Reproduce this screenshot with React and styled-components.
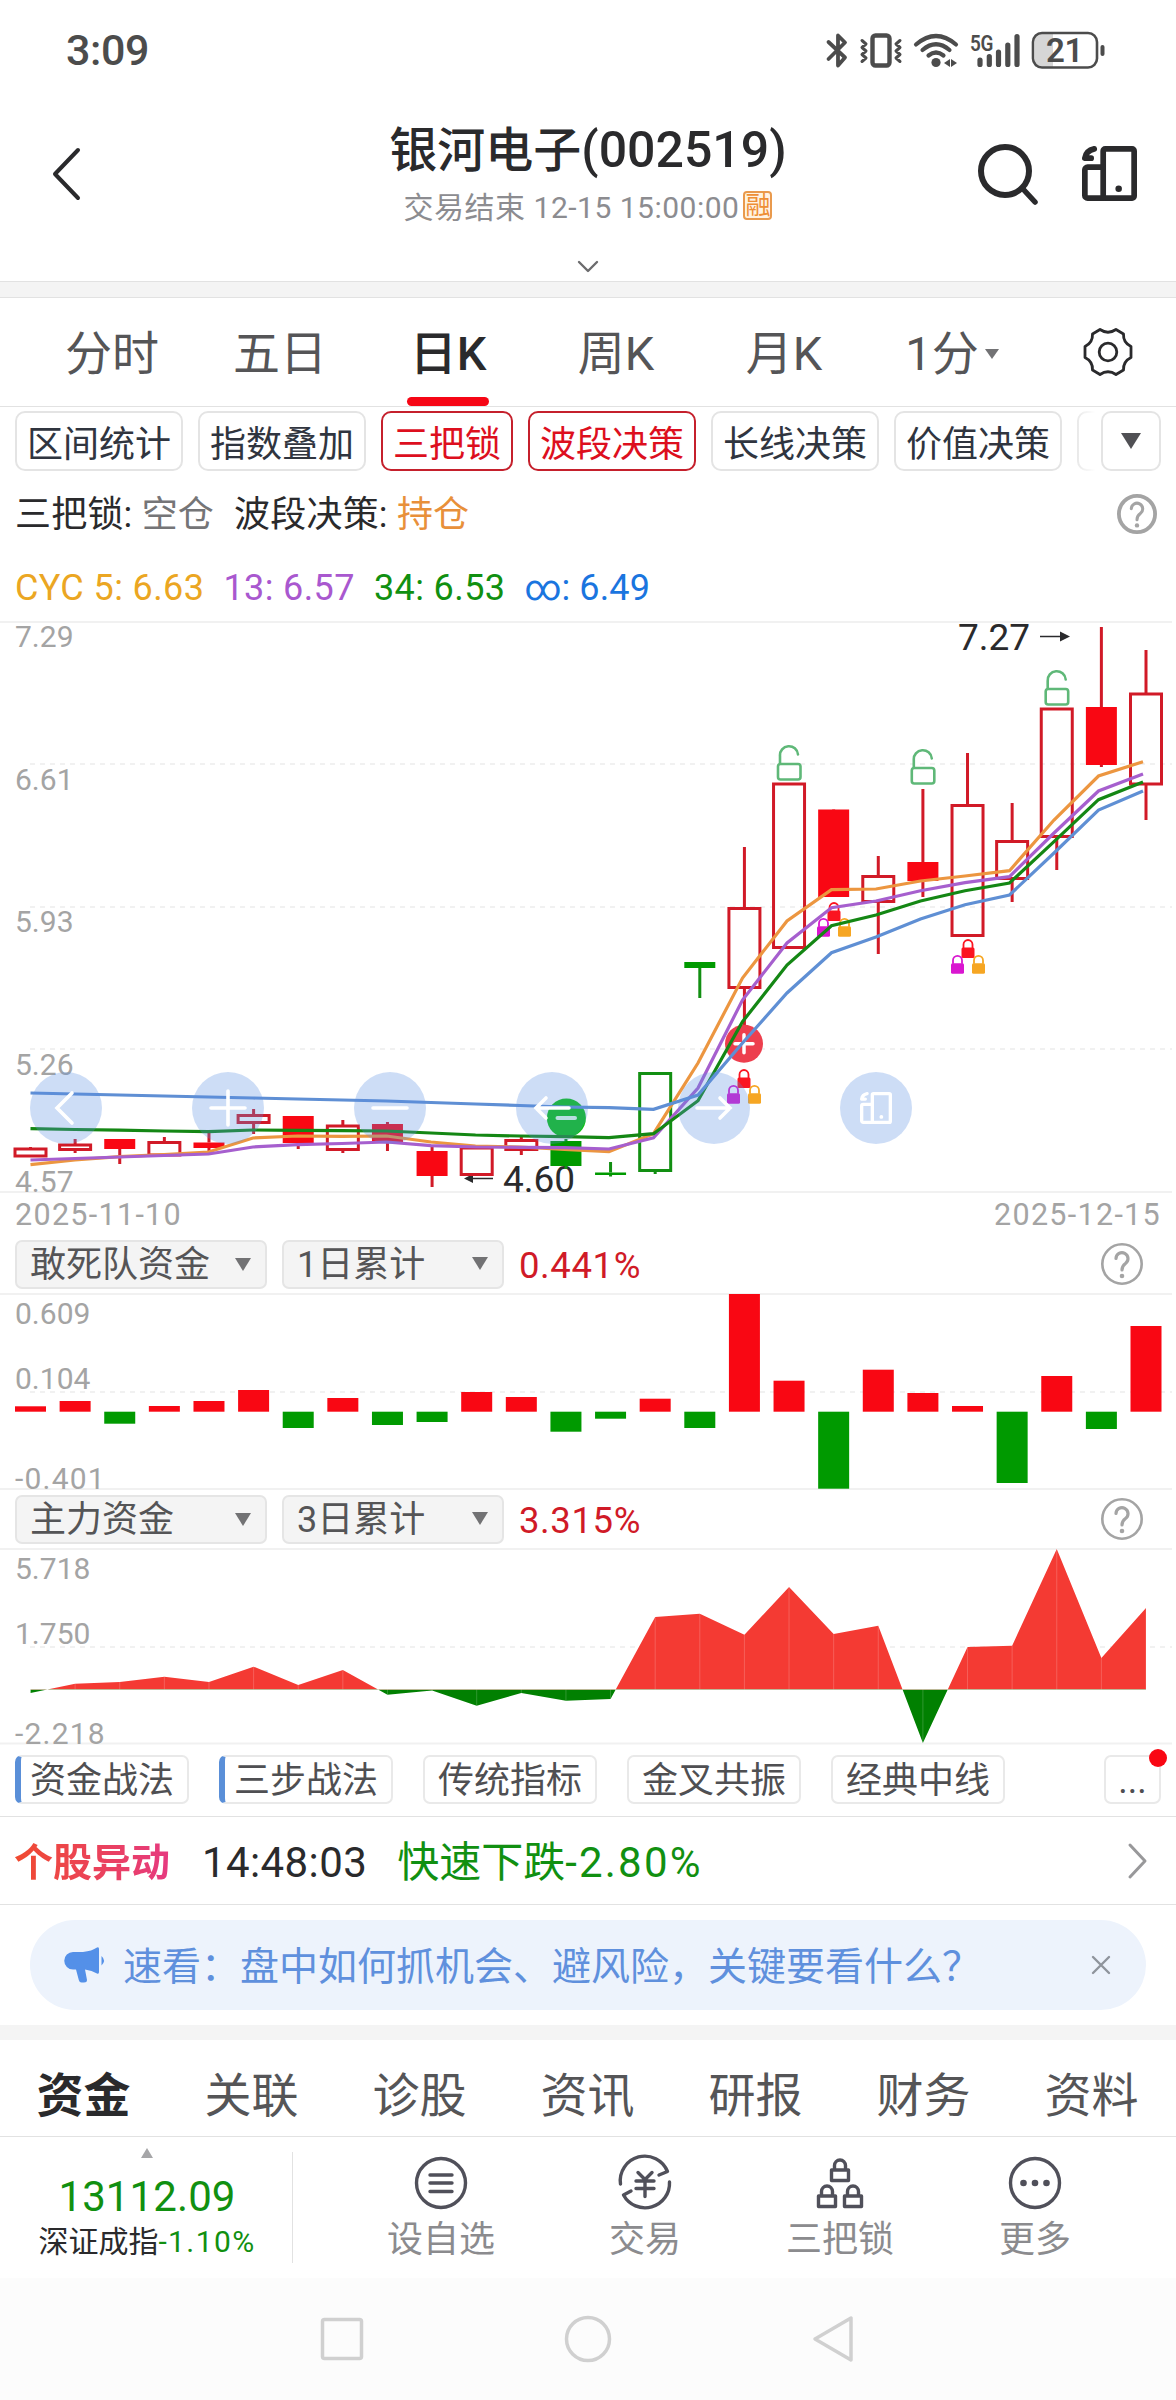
import React from 'react';
import styled, { createGlobalStyle, css } from 'styled-components';

const GlobalStyle = createGlobalStyle`
    * {
        box-sizing: border-box;
    }
    body {
        margin: 0;
        background: #fff;
        font-family: Roboto, "Noto Sans CJK SC", sans-serif;
        color: #2a2a2c;
    }
    svg {
        display: block;
        flex: none;
        overflow: visible;
    }
`;

const PageStyled = styled.div`
    width: 1176px;
    height: 2400px;
    display: flex;
    flex-direction: column;
    overflow: hidden;
    background: #fff;
    white-space: nowrap;
`;

/* ---------- top ---------- */

const StatusBarStyled = styled.div`
    height: 100px;
    padding: 0 66px 0 66px;
    display: flex;
    align-items: center;
    justify-content: space-between;
    font-size: 43px;
    font-weight: 500;
    letter-spacing: -.4px;
    color: #4c4c4c;
`;

const HeaderStyled = styled.header`
    height: 181px;
    display: grid;
    grid-template-columns: 300px 1fr 300px;
`;

const BackStyled = styled.div`
    padding: 47px 0 0 52px;
`;

const TitleBlockStyled = styled.div`
    display: flex;
    flex-direction: column;
    align-items: center;
`;

const TitleStyled = styled.h1`
    margin: 20px 0 0;
    font-size: 48px;
    font-weight: 500;
    line-height: 60px;

    span {
        font-size: 50px;
    }
`;

const SubtitleStyled = styled.div`
    display: flex;
    align-items: center;
    height: 40px;
    margin-top: 4px;
    font-size: 30px;
    letter-spacing: .5px;
    color: #8c8c90;
`;

const MarginBadgeStyled = styled.span`
    width: 29px;
    height: 29px;
    margin-left: 4px;
    border: 2px solid #e99a4d;
    border-radius: 4px;
    background: #fff3e2;
    color: #ee8f35;
    font-size: 25px;
    line-height: 25px;
    letter-spacing: 0;
    text-align: center;
    display: flex;
    align-items: center;
    justify-content: center;
`;

const ExpandStyled = styled.div`
    margin-top: 35px;
`;

const HeaderActionsStyled = styled.div`
    display: flex;
    justify-content: flex-end;
    gap: 43px;
    padding: 43px 39px 0 0;

    svg + svg {
        margin-top: 3px;
    }
`;

const BandStyled = styled.div`
    height: ${({ $height }) => $height}px;
    background: #f4f4f4;
    ${({ $lined }) => $lined && css`
        border-top: 1px solid #e2e2e2;
        border-bottom: 1px solid #e2e2e2;
    `}
`;

/* ---------- period tabs ---------- */

const PeriodTabsStyled = styled.nav`
    height: 109px;
    padding-left: 28px;
    display: flex;
    border-bottom: 1px solid #e2e2e2;
`;

const PeriodTabStyled = styled.div`
    position: relative;
    width: 168px;
    padding-top: 21px;
    display: flex;
    justify-content: center;
    font-size: 47px;
    line-height: 70px;
    color: ${({ $active }) => ($active ? '#2a2a2c' : '#555557')};
    font-weight: ${({ $active }) => ($active ? 500 : 400)};

    ${({ $active }) => $active && css`
        &::after {
            content: "";
            position: absolute;
            left: 43px;
            bottom: 0;
            width: 82px;
            height: 9px;
            border-radius: 5px;
            background: #f60615;
        }
    `}
`;

const CaretStyled = styled.i`
    align-self: ${({ $top }) => ($top ? 'flex-start' : 'center')};
    width: 0;
    height: 0;
    margin: ${({ $margin }) => $margin || 0};
    border-left: ${({ $size }) => $size}px solid transparent;
    border-right: ${({ $size }) => $size}px solid transparent;
    border-top: ${({ $tall }) => $tall}px solid ${({ $color }) => $color || '#727274'};
`;

const SettingsStyled = styled.div`
    flex: 1;
    display: flex;
    justify-content: center;
    padding: 29px 0 0 4px;
`;

/* ---------- indicator chips ---------- */

const ChipRowStyled = styled.div`
    height: 64px;
    padding: 4px 15px 0;
    display: flex;
`;

const ChipScrollStyled = styled.div`
    position: relative;
    width: 1080px;
    display: flex;
    gap: 15px;
    overflow: hidden;

    &::after {
        content: "";
        position: absolute;
        right: 0;
        top: 0;
        width: 22px;
        height: 60px;
        background: linear-gradient(90deg, rgba(255, 255, 255, 0), #fff);
    }
`;

const ChipStyled = styled.div`
    flex: none;
    height: 60px;
    min-width: 60px;
    padding: 3px 10px 0;
    border: 2px solid ${({ $on }) => ($on ? '#c5202c' : '#e4e4e4')};
    border-radius: 10px;
    font-size: 36px;
    line-height: 59px;
    color: ${({ $on }) => ($on ? '#dd0f1e' : '#30353f')};
`;

const MoreChipStyled = styled(ChipStyled)`
    margin-left: 6px;
    padding-top: 0;
    width: 60px;
    display: flex;
    justify-content: center;
`;

/* ---------- signals ---------- */

const SignalRowStyled = styled.div`
    height: 86px;
    padding: 0 19px 0 15px;
    display: flex;
    align-items: center;
    font-size: 36px;
    line-height: 50px;
`;

const SignalStyled = styled.span`
    margin: 1px 20px 0 0;
    letter-spacing: .2px;
    white-space: pre;

    em {
        font-style: normal;
        color: ${({ $color }) => $color};
    }
`;

const PushRightStyled = styled.div`
    margin-left: auto;
`;

const AverageRowStyled = styled.div`
    height: 64px;
    padding: 0 0 0 15px;
    display: flex;
    gap: 19px;
    font-size: 36px;
    line-height: 62px;
    letter-spacing: .4px;
`;

const AverageStyled = styled.span`
    color: ${({ $color }) => $color};

    &:last-child {
        letter-spacing: .1px;
    }
`;

/* ---------- charts ---------- */

const ChartBoxStyled = styled.div`
    position: relative;
`;

const ChartButtonsStyled = styled.div`
    position: absolute;
    left: 30px;
    top: 451px;
    display: flex;
    gap: 90px;
`;

const ChartButtonStyled = styled.div`
    width: 72px;
    height: 72px;
    border-radius: 50%;
    background: rgba(88, 141, 225, .3);
    display: flex;
    align-items: center;
    justify-content: center;
`;

const DateRowStyled = styled.div`
    height: 42px;
    padding: 0 15px 0 15px;
    display: flex;
    justify-content: space-between;
    font-size: 30.5px;
    line-height: 43px;
    letter-spacing: 1.3px;
    color: #a4a4a4;
`;

const IndicatorHeadStyled = styled.div`
    height: 58px;
    padding: 0 33px 0 15px;
    display: flex;
    align-items: center;
`;

const SelectStyled = styled.div`
    width: ${({ $width }) => $width}px;
    height: 49px;
    margin-right: 15px;
    padding: 2px 14px 0 13px;
    border: 2px solid #e5e5e5;
    border-radius: 7px;
    background: #f4f4f4;
    display: flex;
    align-items: center;
    justify-content: space-between;
    font-size: 36px;
    line-height: 48px;
    color: #555557;
`;

const IndicatorValueStyled = styled.span`
    margin-top: 2px;
    font-size: 36.5px;
    letter-spacing: .6px;
    color: #d01a27;
`;

/* ---------- strategies ---------- */

const StrategyRowStyled = styled.div`
    height: 72px;
    padding: 10px 15px 0;
    display: flex;
    gap: 30px;
    border-bottom: 1px solid #e2e2e2;
`;

const StrategyStyled = styled.div`
    position: relative;
    width: 174px;
    height: 49px;
    border: 2px solid #e9e9e9;
    border-left: ${({ $marked }) => ($marked ? '6px solid #5a8fd8' : '2px solid #e9e9e9')};
    border-radius: 7px;
    padding-left: ${({ $marked }) => ($marked ? 9 : 13)}px;
    font-size: 36px;
    line-height: 49px;
    color: #4f4f52;
`;

const StrategyMoreStyled = styled(StrategyStyled)`
    width: 57px;
    margin-left: auto;
    padding: 0;
    text-align: center;
`;

const DotStyled = styled.i`
    position: absolute;
    right: -8px;
    top: -8px;
    width: 18px;
    height: 18px;
    border-radius: 50%;
    background: #f90713;
`;

/* ---------- alert, banner ---------- */

const AlertRowStyled = styled.div`
    height: 88px;
    padding: 0 28px 0 14px;
    display: flex;
    align-items: center;
    border-bottom: 1px solid #e2e2e2;
    font-size: 42px;
    line-height: 60px;
`;

const AlertTagStyled = styled.b`
    width: 156px;
    margin: 4px 32px 0 0;
    font-size: 39px;
    background: linear-gradient(90deg, #f04b30, #e63a80);
    -webkit-background-clip: text;
    background-clip: text;
    color: transparent;
`;

const AlertTimeStyled = styled.span`
    margin-top: 4px;
    letter-spacing: .4px;
`;

const AlertTextStyled = styled.span`
    margin: 4px 0 0 30px;
    color: #119011;

    span {
        letter-spacing: 2.2px;
    }
`;

const BannerStyled = styled.div`
    height: 90px;
    margin: 15px 30px;
    padding: 0 35px 0 33px;
    border-radius: 45px;
    background: #edf3fc;
    display: flex;
    align-items: center;
    font-size: 39px;
    color: #5f90dd;

    span {
        margin: -4px 0 0 16px;
    }
`;

/* ---------- bottom ---------- */

const SectionTabsStyled = styled.nav`
    height: 97px;
    display: grid;
    grid-template-columns: repeat(7, 1fr);
    border-bottom: 1px solid #e2e2e2;
`;

const SectionTabStyled = styled.div`
    padding: 15px 1px 0 0;
    text-align: center;
    font-size: 47px;
    line-height: 82px;
    font-weight: ${({ $active }) => ($active ? 700 : 400)};
    color: ${({ $active }) => ($active ? '#2a2a2c' : '#555557')};
`;

const BottomBarStyled = styled.div`
    height: 141px;
    display: flex;
`;

const IndexStyled = styled.div`
    width: 293px;
    height: 111px;
    margin-top: 15px;
    padding-left: 2px;
    border-right: 1px solid #e2e2e2;
    display: flex;
    flex-direction: column;
    align-items: center;
    font-size: 30px;
    line-height: 36px;

    b {
        margin-top: 12px;
        font-size: 42px;
        line-height: 54px;
        font-weight: 400;
        letter-spacing: .1px;
        color: #119011;
    }

    em {
        font-style: normal;
        letter-spacing: 1.4px;
        color: #119011;
    }

    svg {
        margin-top: -4px;
    }
`;

const ActionsStyled = styled.div`
    display: flex;
    gap: 105px;
    padding-left: 85px;
`;

const ActionStyled = styled.div`
    min-width: ${({ $minWidth }) => $minWidth || 0}px;
    padding-top: 18px;
    display: flex;
    flex-direction: column;
    align-items: center;
    font-size: 36px;
    line-height: 44px;
    color: #8b8b8e;

    svg {
        margin-bottom: 7px;
    }
`;

const NavBarStyled = styled.div`
    height: 122px;
    padding-left: 319px;
    background: #fcfcfc;
    display: flex;
    align-items: center;
    gap: 199px;
`;

/* ---------- icons ---------- */

const StatusIcons = () => (
    <svg width="286" height="42" viewBox="824 28 286 42" fill="none" stroke="#4c4c4c" strokeLinecap="round" strokeLinejoin="round">
        <path strokeWidth="3.8" d="M828.5 41 L845 56.5 L838 64.5 V34.5 L845 41.5 L828.5 58" />
        <rect x="872.5" y="34.5" width="17" height="30" rx="3" strokeWidth="4.4" />
        <path strokeWidth="3" d="M862 39.5l4 3.5-4 3.5 4 3.5-4 3.5 4 3.5-4 3.5M900 39.5l-4 3.5 4 3.5-4 3.5 4 3.5-4 3.5 4 3.5" />
        <path strokeWidth="4.2" d="M916 43.5 Q936 26.500 956 43.500 M922.500 49 Q936 37.500 949.500 49 M928.500 54.500 Q936 48.500 943.500 54.500" />
        <circle cx="936" cy="61.500" r="4.600" fill="#4c4c4c" stroke="none" />
        <path d="M944 62l6-4v8zM957 62l-6-4v8z" fill="#4c4c4c" stroke="none" />
        <text x="970" y="49.500" fontSize="22" fontWeight="600" textLength="23" lengthAdjust="spacingAndGlyphs" fill="#4c4c4c" stroke="none">5G</text>
        <path strokeWidth="5.200" d="M980 59v4.500M989.300 55.500v8M998.500 51v12.500M1007.800 44v19.500M1017 35.500v28" />
        <rect x="1035" y="33" width="18" height="33" fill="#d6d6d6" stroke="none" />
        <rect x="1033" y="32" width="64" height="34.500" rx="9" strokeWidth="2.600" />
        <path strokeWidth="4" d="M1102.500 46v7" />
        <text x="1046" y="61" fontSize="33" fontWeight="600" fill="#4c4c4c" stroke="none">21</text>
    </svg>
);

const ChevronIcon = ({ width, height, points, color, weight }) => (
    <svg width={width} height={height} fill="none" stroke={color} strokeWidth={weight} strokeLinecap="round" strokeLinejoin="round">
        <polyline points={points} />
    </svg>
);

const SearchIcon = () => (
    <svg width="62" height="62" viewBox="0 0 62 62" fill="none" stroke="#2a2a2c" strokeLinecap="round">
        <circle cx="28" cy="28" r="24" strokeWidth="6" />
        <path d="M46 46 L58 59" strokeWidth="5.500" />
    </svg>
);

const RotateIcon = ({ size, color }) => (
    <svg width={size} height={size} viewBox="0 0 54 54" fill="none" stroke={color} strokeWidth="5.600" strokeLinecap="round" strokeLinejoin="round">
        <rect x="20.800" y="2.800" width="30.400" height="48.400" rx="2" />
        <path d="M20.800 20.800H5.500a2.700 2.700 0 0 0-2.700 2.700V48.500a2.700 2.700 0 0 0 2.700 2.700H20.800" />
        <path d="M12 2.800C6.500 4 3.500 7 2.800 12H9" />
        <circle cx="36" cy="42" r="3.200" fill={color} stroke="none" />
    </svg>
);

const GearIcon = () => (
    <svg width="50" height="50" viewBox="-25 -25 50 50" fill="none" stroke="#2a2a2c" strokeWidth="2.800" strokeLinejoin="round">
        <path d="M-8 -22.500Q0 -17 8 -22.500L15.500 -18Q15 -9.500 23 -5.500V5.500Q15 9.500 15.500 18L8 22.500Q0 17 -8 22.500L-15.500 18Q-15 9.500 -23 5.500V-5.500Q-15 -9.500 -15.500 -18Z" />
        <circle r="8.800" />
    </svg>
);

const HelpIcon = ({ size, weight }) => (
    <svg width={size} height={size} viewBox="-21 -21 42 42" fill="none" stroke="#a4a4a4" strokeLinecap="round">
        <circle r={21 - weight / 2} strokeWidth={weight} />
        <path d="M-6 -5.500a6 6 0 1 1 9.500 5Q0 2 0 6" strokeWidth="3.200" />
        <circle cy="12" r="2.300" fill="#a4a4a4" stroke="none" />
    </svg>
);

const HornIcon = () => (
    <svg width="44" height="38" viewBox="0 0 44 38" fill="#5490e8">
        <path d="M10 6H20Q29 5 34 1.500Q36 .500 36 3V26Q36 28.500 34 27.500Q29 24.500 22 23.500L24 34Q24 36.500 21 36.500H18.500Q16.500 36.500 15.800 34L13 23.500H10A8.500 8.500 0 0 1 10 6Z" />
        <path d="M38.500 10Q43.500 14.500 38.500 19.500Z" />
    </svg>
);

const Lock = ({ x, y, color }) => (
    <g transform={`translate(${x} ${y})`}>
        <path d="M-4.500 9V5.500a4.500 4.500 0 0 1 9 0V9" fill="none" stroke={color} strokeWidth="1.800" />
        <rect x="-6.500" y="8.500" width="13" height="10.500" rx="1.500" fill={color} />
    </g>
);

const LockTrio = ({ x, y }) => (
    <g>
        <Lock x={x} y={y} color="#fb1420" />
        <Lock x={x - 10.5} y={y + 15.8} color="#d916d0" />
        <Lock x={x + 10.5} y={y + 15.8} color="#f6a623" />
    </g>
);

const OpenLock = ({ x, y }) => (
    <g transform={`translate(${x} ${y})`} fill="none" stroke="#5fb878" strokeWidth="2.600" strokeLinecap="round">
        <path d="M-9 17V10a9 9 0 0 1 18 -1.500" />
        <rect x="-11" y="18" width="22.500" height="15.500" rx="2.500" />
    </g>
);

/* ---------- chart data ---------- */

const RED = '#d11a27';
const GREEN = '#128f12';
const FIRST_X = 30.5;
const STEP = 44.62;

const candleX = (i) => FIRST_X + i * STEP;
const lineX = (i) => FIRST_X + i * 44.5;

// kind, high, body top, body bottom, low
const candles = [
    ['up', 1147, 1149, 1156, 1156],
    ['up', 1139, 1145, 1149.5, 1153],
    ['full', 1139, 1139, 1149, 1164],
    ['up', 1137, 1142.5, 1155, 1155],
    ['full', 1133, 1142.5, 1148, 1151],
    ['up', 1109, 1115.5, 1122.5, 1134],
    ['full', 1116, 1116, 1143, 1149],
    ['up', 1120, 1126, 1149.5, 1153],
    ['full', 1122, 1124, 1143, 1151],
    ['full', 1146, 1151, 1176, 1187],
    ['up', 1148, 1148, 1174.5, 1176],
    ['up', 1136, 1140.5, 1149.5, 1155],
    ['fall', 1139, 1141, 1166, 1169],
    ['fall', 1162, 1172.5, 1175, 1176.5],
    ['down', 1073, 1073.5, 1170.5, 1174],
    ['fall', 962, 962, 968, 998],
    ['up', 847, 908.5, 987.5, 1040],
    ['up', 784, 784, 947.5, 948],
    ['full', 809, 809.5, 897, 897],
    ['up', 856, 876.5, 901.5, 954],
    ['full', 789, 862, 881, 897],
    ['up', 753, 805.5, 935.5, 936],
    ['up', 803, 841.5, 878.5, 902],
    ['up', 709, 709, 836.5, 870],
    ['full', 627, 707, 765, 767],
    ['up', 650, 694, 784, 820],
];

const averages = [
    {
        name: 'CYC 5: 6.63',
        color: '#eba622',
        stroke: '#ec9640',
        ys: [1164.7, 1160, 1156.7, 1154.7, 1152, 1138, 1136, 1136.3, 1136, 1142, 1146, 1147, 1149.5, 1151.7, 1133.7, 1063, 978, 921, 889.7, 889, 881, 876, 870.7, 820, 776, 761.7],
    },
    {
        name: '13: 6.57',
        color: '#a958cf',
        stroke: '#a65fce',
        ys: [1160, 1158.5, 1157, 1155.500, 1154, 1147, 1144.7, 1143.5, 1142, 1145.7, 1147, 1147.3, 1147.7, 1149, 1137.7, 1088, 1000, 943, 907.7, 901, 890.7, 882.7, 876.7, 833, 791, 774],
    },
    {
        name: '34: 6.53',
        color: '#119011',
        stroke: '#148714',
        ys: [1128.7, 1129.5, 1130.2, 1131, 1131.7, 1130, 1130.3, 1130.6, 1131, 1133, 1135, 1136, 1136.7, 1137.7, 1133.7, 1100.7, 1021.7, 965, 925.7, 915, 901, 890.7, 883, 841.7, 799.7, 782],
    },
    {
        name: '∞: 6.49',
        color: '#1a75df',
        stroke: '#5f8fd4',
        ys: [1093, 1094, 1095, 1096, 1097, 1098, 1099, 1100, 1101, 1102.5, 1104, 1105.5, 1107, 1107.7, 1109.3, 1095, 1043, 993, 952.7, 937, 919, 904.7, 895, 853, 810, 791],
    },
];

const barZero = 1411.7;
const bars = [1406.3, 1401, 1423.7, 1406, 1401, 1390, 1428, 1398, 1425, 1422, 1392, 1397, 1431.7, 1418.7, 1398.7, 1428, 1294, 1380.7, 1488.7, 1369.7, 1393, 1406, 1483, 1376, 1429, 1326];

const areaZero = 1689.5;
const area = [1693, 1683.7, 1682, 1676.7, 1682, 1666.7, 1685, 1670, 1694.7, 1690.5, 1705.7, 1693, 1700.7, 1699, 1617, 1613.7, 1634.7, 1587, 1634, 1625.7, 1743, 1647, 1645.7, 1549, 1658, 1608];

const Candle = ({ index, kind, high, top, bottom, low }) => {
    const x = candleX(index);
    const green = kind === 'fall' || kind === 'down';
    const hollow = kind === 'up' || kind === 'down';
    const stroke = green ? GREEN : RED;

    return (
        <g>
            <path d={`M${x} ${high}V${top}M${x} ${bottom}V${low}`} stroke={stroke} strokeWidth="3" />
            {hollow
                ? <rect x={x - 15.5} y={top} width="31" height={bottom - top} fill="none" stroke={stroke} strokeWidth="3" />
                : <rect x={x - 15.5} y={top} width="31" height={bottom - top} fill={green ? '#009a00' : '#f90713'} />}
        </g>
    );
};

const Grid = ({ top, bottom, dashed }) => (
    <g stroke="#f1f1f1" strokeWidth="2">
        <path d={`M0 ${top}H1172M0 ${bottom}H1172`} />
        {dashed.map((y) => <path key={y} d={`M30 ${y}H1172`} strokeDasharray="5 5" />)}
    </g>
);

const AxisLabels = ({ labels }) => (
    <g fill="#a4a4a4" fontSize="30">
        {labels.map(([text, y]) => (
            <text key={text} x="15" y={y} letterSpacing={text.startsWith('-') ? 1.2 : 0}>{text}</text>
        ))}
    </g>
);

const PriceChart = () => (
    <svg width="1176" height="572" viewBox="0 621 1176 572">
        <Grid top={622} bottom={1192} dashed={[764, 907, 1049]} />
        <AxisLabels labels={[['7.29', 647], ['6.61', 789.5], ['5.93', 932], ['5.26', 1075], ['4.57', 1191.5]]} />
        <g fontSize="37" fill="#2a2a2c">
            <text x="958" y="650">7.27</text>
            <text x="503" y="1192">4.60</text>
            <path d="M1040 636.5H1062" stroke="#2a2a2c" strokeWidth="1.5" />
            <path d="M1060 631.500L1070 636.500L1060 641.500Z" />
            <path d="M471 1178.500H493" stroke="#2a2a2c" strokeWidth="1.5" />
            <path d="M473 1174L464 1178.500L473 1183Z" />
        </g>
        {candles.map(([kind, high, top, bottom, low], i) => (
            <Candle key={i} index={i} kind={kind} high={high} top={top} bottom={bottom} low={low} />
        ))}
        <circle cx="566.400" cy="1118" r="19.500" fill="#09c20b" />
        <path d="M557.500 1118H575" stroke="#e3ffe0" strokeWidth="4" strokeLinecap="round" />
        <circle cx="744" cy="1043.700" r="19" fill="#ed3f4e" />
        <path d="M735 1043.700H753M744 1034.700V1052.700" stroke="#fff" strokeWidth="3.500" strokeLinecap="round" />
        <LockTrio x={744} y={1069} />
        <LockTrio x={834} y={902} />
        <LockTrio x={968} y={939} />
        {averages.map(({ name, stroke, ys }) => (
            <polyline key={name} points={ys.map((y, i) => `${lineX(i)},${y}`).join(' ')} fill="none" stroke={stroke} strokeWidth="3.200" />
        ))}
        <OpenLock x={789} y={746} />
        <OpenLock x={922.8} y={750} />
        <OpenLock x={1056.7} y={671} />
    </svg>
);

const BarChart = () => (
    <svg width="1176" height="197" viewBox="0 1293 1176 197">
        <Grid top={1294} bottom={1489} dashed={[1392]} />
        <AxisLabels labels={[['0.609', 1324], ['0.104', 1389], ['-0.401', 1488.5]]} />
        {bars.map((y, i) => (
            <rect key={i} x={candleX(i) - 15.5} y={Math.min(y, barZero)} width="31" height={Math.abs(y - barZero)} fill={y < barZero ? '#f90713' : '#009a00'} />
        ))}
    </svg>
);

const AreaChart = () => {
    const points = area.map((y, i) => `${candleX(i)},${y}`).join(' ');
    const shape = `${candleX(0)},${areaZero} ${points} ${candleX(25)},${areaZero}`;

    return (
        <svg width="1176" height="197" viewBox="0 1548 1176 197">
            <clipPath id="above"><rect x="0" y="1548" width="1176" height={areaZero - 1548} /></clipPath>
            <clipPath id="below"><rect x="0" y={areaZero} width="1176" height="56" /></clipPath>
            <Grid top={1549} bottom={1743.5} dashed={[1647]} />
            <AxisLabels labels={[['5.718', 1579], ['1.750', 1644], ['-2.218', 1743.5]]} />
            <polygon points={shape} fill="#f43a33" clipPath="url(#above)" />
            <polygon points={shape} fill="#018001" clipPath="url(#below)" />
            {area.map((y, i) => (
                <path key={i} d={`M${candleX(i)} ${areaZero}V${y}`} stroke="#fff" strokeWidth="1" opacity=".18" />
            ))}
        </svg>
    );
};

const buttonGlyphs = [
    'M6 -15L-9 0L6 15',
    'M-17 0H17M0 -17V17',
    'M-17 0H17',
    'M17 0H-16M-6 -10L-16 0L-6 10',
    'M-17 0H16M6 -10L16 0L6 10',
];

const IndicatorHead = ({ name, span, value }) => (
    <IndicatorHeadStyled>
        <SelectStyled $width={252}>{name}<CaretStyled $size={8.5} $tall={13} $margin="-2px 0 0" /></SelectStyled>
        <SelectStyled $width={222}>{span}<CaretStyled $size={8.5} $tall={13} $margin="-4px 0 0" /></SelectStyled>
        <IndicatorValueStyled>{value}</IndicatorValueStyled>
        <PushRightStyled><HelpIcon size={42} weight={2.6} /></PushRightStyled>
    </IndicatorHeadStyled>
);

/* ---------- bottom actions ---------- */

const actionIcons = {
    list: (
        <g>
            <circle r="24.500" />
            <path d="M-11 -8H11M-11 0H11M-11 8.500H11" />
        </g>
    ),
    trade: (
        <g>
            <path d="M-24.500 1A24.500 24.500 0 0 1 22.500 -11.500L14 -8M24.500 -1A24.500 24.500 0 0 1 -21.500 12L-14 8" />
            <path d="M-7 -10.500L0 -3.500L7 -10.500M0 -3V13.500M-9 -2H9M-9 5.500H9" />
        </g>
    ),
    locks: (
        <g>
            <path d="M-8.500 -13H8.500V-2.500H-8.500ZM-5.500 -13V-17.500a5.500 5.500 0 0 1 11 0V-13" />
            <path d="M-21.500 13H-4.500V23.500H-21.500ZM-18.500 13V8.500a5.500 5.500 0 0 1 11 0V13" />
            <path d="M4.500 13H21.500V23.500H4.500ZM7.500 13V8.500a5.500 5.500 0 0 1 11 0V13" />
        </g>
    ),
    more: (
        <g>
            <circle r="24.500" />
            <g fill="#50505a" stroke="none">
                <circle cx="-11.500" r="3.300" />
                <circle r="3.300" />
                <circle cx="11.500" r="3.300" />
            </g>
        </g>
    ),
};

const Action = ({ icon, label, minWidth }) => (
    <ActionStyled $minWidth={minWidth}>
        <svg width="56" height="56" viewBox="-28 -28 56 56" fill="none" stroke="#50505a" strokeWidth="3.400" strokeLinecap="round" strokeLinejoin="round">
            {actionIcons[icon]}
        </svg>
        {label}
    </ActionStyled>
);

const periods = ['分时', '五日', '日K', '周K', '月K'];
const chips = ['区间统计', '指数叠加', '三把锁', '波段决策', '长线决策', '价值决策'];
const chipsOn = ['三把锁', '波段决策'];
const strategies = ['资金战法', '三步战法', '传统指标', '金叉共振', '经典中线'];
const sections = ['资金', '关联', '诊股', '资讯', '研报', '财务', '资料'];

const App = () => (
    <PageStyled>
        <GlobalStyle />
        <StatusBarStyled>
            3:09
            <StatusIcons />
        </StatusBarStyled>

        <HeaderStyled>
            <BackStyled>
                <ChevronIcon width={30} height={54} points="26,3 3,27 26,51" color="#2a2a2c" weight={4} />
            </BackStyled>
            <TitleBlockStyled>
                <TitleStyled>银河电子<span>(002519)</span></TitleStyled>
                <SubtitleStyled>
                    交易结束 12-15 15:00:00
                    <MarginBadgeStyled>融</MarginBadgeStyled>
                </SubtitleStyled>
                <ExpandStyled>
                    <ChevronIcon width={22} height={14} points="2,2 11,11 20,2" color="#6c6c6e" weight={2.4} />
                </ExpandStyled>
            </TitleBlockStyled>
            <HeaderActionsStyled>
                <SearchIcon />
                <RotateIcon size={55} color="#2a2a2c" />
            </HeaderActionsStyled>
        </HeaderStyled>

        <BandStyled $height={17} $lined />

        <PeriodTabsStyled>
            {periods.map((period) => (
                <PeriodTabStyled key={period} $active={period === '日K'}>{period}</PeriodTabStyled>
            ))}
            <PeriodTabStyled>1分<CaretStyled $size={7.5} $tall={10} $top $margin="30px 0 0 6px" /></PeriodTabStyled>
            <SettingsStyled><GearIcon /></SettingsStyled>
        </PeriodTabsStyled>

        <ChipRowStyled>
            <ChipScrollStyled>
                {chips.map((chip) => (
                    <ChipStyled key={chip} $on={chipsOn.includes(chip)}>{chip}</ChipStyled>
                ))}
                <ChipStyled />
            </ChipScrollStyled>
            <MoreChipStyled><CaretStyled $size={10.5} $tall={16} $color="#505054" /></MoreChipStyled>
        </ChipRowStyled>

        <SignalRowStyled>
            <SignalStyled $color="#757577">三把锁: <em>空仓</em></SignalStyled>
            <SignalStyled $color="#e8903a">波段决策: <em>持仓</em></SignalStyled>
            <PushRightStyled><HelpIcon size={40} weight={4} /></PushRightStyled>
        </SignalRowStyled>

        <AverageRowStyled>
            {averages.map(({ name, color }) => <AverageStyled key={name} $color={color}>{name}</AverageStyled>)}
        </AverageRowStyled>

        <ChartBoxStyled>
            <PriceChart />
            <ChartButtonsStyled>
                {buttonGlyphs.map((d) => (
                    <ChartButtonStyled key={d}>
                        <svg width="40" height="40" viewBox="-20 -20 40 40" fill="none" stroke="#fff" strokeWidth="3.6" strokeLinecap="round">
                            <path d={d} />
                        </svg>
                    </ChartButtonStyled>
                ))}
                <ChartButtonStyled><RotateIcon size={32} color="#fff" /></ChartButtonStyled>
            </ChartButtonsStyled>
        </ChartBoxStyled>
        <DateRowStyled><span>2025-11-10</span><span>2025-12-15</span></DateRowStyled>

        <IndicatorHead name="敢死队资金" span="1日累计" value="0.441%" />
        <BarChart />
        <IndicatorHead name="主力资金" span="3日累计" value="3.315%" />
        <AreaChart />

        <StrategyRowStyled>
            {strategies.map((name, i) => <StrategyStyled key={name} $marked={i < 2}>{name}</StrategyStyled>)}
            <StrategyMoreStyled>...<DotStyled /></StrategyMoreStyled>
        </StrategyRowStyled>

        <AlertRowStyled>
            <AlertTagStyled>个股异动</AlertTagStyled>
            <AlertTimeStyled>14:48:03</AlertTimeStyled>
            <AlertTextStyled>快速下跌<span>-2.80%</span></AlertTextStyled>
            <PushRightStyled>
                <ChevronIcon width={20} height={36} points="2,2 17,18 2,34" color="#98989a" weight={3} />
            </PushRightStyled>
        </AlertRowStyled>

        <BannerStyled>
            <HornIcon />
            <span>速看：盘中如何抓机会、避风险，关键要看什么？</span>
            <PushRightStyled>
                <svg width="20" height="20" stroke="#8f949c" strokeWidth="2.4" strokeLinecap="round">
                    <path d="M2 2L18 18M18 2L2 18" />
                </svg>
            </PushRightStyled>
        </BannerStyled>

        <BandStyled $height={15} />

        <SectionTabsStyled>
            {sections.map((name, i) => <SectionTabStyled key={name} $active={i === 0}>{name}</SectionTabStyled>)}
        </SectionTabsStyled>

        <BottomBarStyled>
            <IndexStyled>
                <svg width="14" height="10" fill="#a6a6a8"><path d="M7 0L13 10H1Z" /></svg>
                <b>13112.09</b>
                <span>深证成指<em>-1.10%</em></span>
            </IndexStyled>
            <ActionsStyled>
                <Action icon="list" label="设自选" minWidth={126} />
                <Action icon="trade" label="交易" />
                <Action icon="locks" label="三把锁" />
                <Action icon="more" label="更多" />
            </ActionsStyled>
        </BottomBarStyled>

        <NavBarStyled>
            <svg width="46" height="46" fill="none" stroke="#d0d0d0" strokeWidth="3.5"><rect x="3.500" y="3.500" width="39" height="39" rx="2" /></svg>
            <svg width="48" height="48" fill="none" stroke="#d0d0d0" strokeWidth="3.5"><circle cx="24" cy="24" r="21.500" /></svg>
            <svg width="46" height="48" fill="none" stroke="#d0d0d0" strokeWidth="3.5" strokeLinejoin="round"><path d="M40 3V45L4 24Z" /></svg>
        </NavBarStyled>
    </PageStyled>
);

export default App;
